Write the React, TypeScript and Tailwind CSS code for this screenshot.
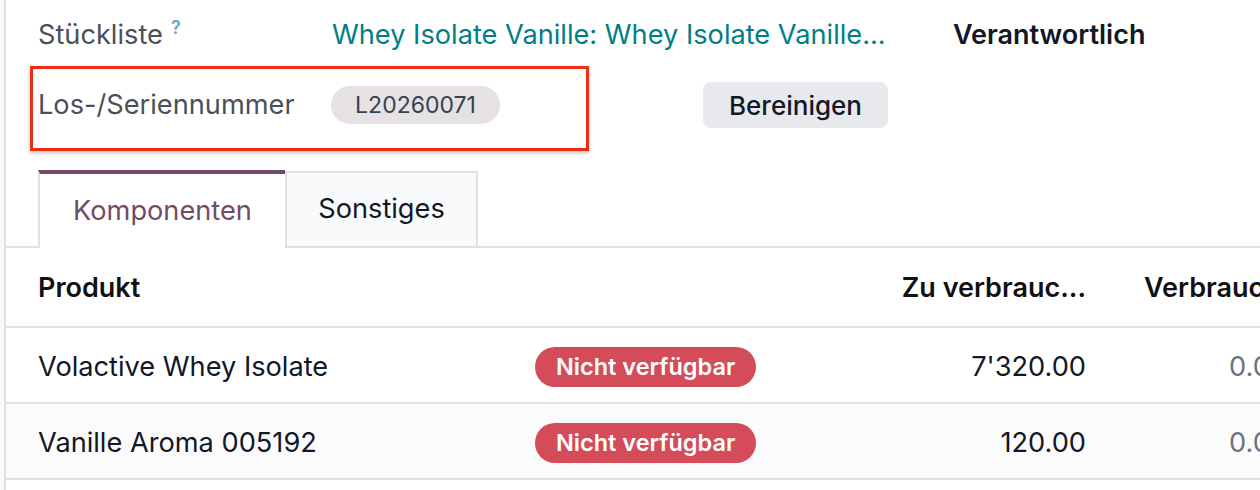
import React from 'react'

const font = { fontFamily: 'Inter, "Noto Sans", sans-serif' }

function Badge() {
  return (
    <span className="inline-flex h-[40px] items-center rounded-full bg-[#d44c59] px-[21px] text-[23.5px] font-semibold text-white">
      Nicht verfügbar
    </span>
  )
}

function Row({ name, qty, alt = false }: { name: string; qty: string; alt?: boolean }) {
  return (
    <div className={`flex h-[76px] items-center border-b-2 border-[#dee2e6] pt-[4px] ${alt ? 'bg-[#fbfbfc]' : 'bg-white'}`}>
      <div className="w-[529px] shrink-0 pl-[32px] text-[27.2px] text-[#111827]">{name}</div>
      <div className="w-[300px] shrink-0">
        <Badge />
      </div>
      <div className="w-[251px] shrink-0 text-right text-[27.2px] text-[#111827]">{qty}</div>
      <div className="w-[201px] shrink-0 text-right text-[27.2px] text-[#6b7280]">0.00</div>
    </div>
  )
}

export default function App() {
  return (
    <div className="flex h-[490px] w-[1260px] overflow-hidden bg-white" style={font}>
      <div className="w-[4px] shrink-0 bg-[#f8f9fa]" />
      <div className="relative flex min-w-0 flex-1 flex-col border-l-2 border-[#dee2e6]">
        {/* Red annotation frame */}
        <div className="pointer-events-none absolute left-[24px] top-[66px] h-[85px] w-[559px] border-[3px] border-[#ee2e10] shadow-[0_2px_4px_rgba(0,0,0,0.25)]" />

        {/* Field: Stückliste */}
        <div className="mt-[15px] flex h-[40px] items-center pl-[32px] leading-[40px]">
          <div className="w-[294px] shrink-0 text-[27.2px] text-[#4b5058]">
            Stückliste
            <sup className="relative top-[4px] ml-[8px] align-top text-[18px] font-semibold leading-none text-[#6aa6c8]">?</sup>
          </div>
          <div className="w-[621px] shrink-0 whitespace-nowrap text-[27.2px] text-[#017e84]">
            Whey Isolate Vanille: Whey Isolate Vanille...
          </div>
          <div className="whitespace-nowrap text-[27px] font-semibold text-[#111827]">Verantwortlich</div>
        </div>

        {/* Field: Los-/Seriennummer */}
        <div className="mt-[27px] flex h-[46px] items-center pl-[32px]">
          <div className="w-[293px] shrink-0 text-[27.2px] text-[#4b5058]">Los-/Seriennummer</div>
          <span className="inline-flex h-[38px] w-[169px] items-center justify-center rounded-full bg-[#e6e1e2] text-[23px] text-[#374151]">
            L20260071
          </span>
          <button className="ml-[203px] h-[46px] w-[185px] rounded-[8px] bg-[#e7e9ed] text-[26px] font-medium text-[#111827]">
            Bereinigen
          </button>
        </div>

        {/* Tabs */}
        <div className="mt-[42px] flex h-[78px] border-b-2 border-[#dee2e6] pl-[32px]">
          <div className="-mb-[2px] flex w-[247px] items-center justify-center border-l-2 border-t-4 border-[#dee2e6] border-t-[#714b67] bg-white text-[27.2px] text-[#714b67]">
            Komponenten
          </div>
          <div className="mt-[1px] flex w-[193px] items-center justify-center border-x-2 border-t-2 border-[#dee2e6] bg-[#f9fafb] text-[27.2px] text-[#111827]">
            Sonstiges
          </div>
        </div>

        {/* Table header */}
        <div className="flex h-[80px] items-center border-b-2 border-[#dee2e6] pt-[2px]">
          <div className="w-[529px] shrink-0 pl-[32px] text-[27px] font-semibold text-[#111111]">Produkt</div>
          <div className="w-[300px] shrink-0" />
          <div className="w-[251px] shrink-0 whitespace-nowrap text-right text-[27px] font-semibold text-[#111111]">Zu verbrauc...</div>
          <div className="w-[199px] shrink-0 whitespace-nowrap pl-[58px] text-[27px] font-semibold text-[#111111]">Verbraucht</div>
        </div>

        <Row name="Volactive Whey Isolate" qty="7'320.00" />
        <Row name="Vanille Aroma 005192" qty="120.00" alt />
      </div>
    </div>
  )
}
